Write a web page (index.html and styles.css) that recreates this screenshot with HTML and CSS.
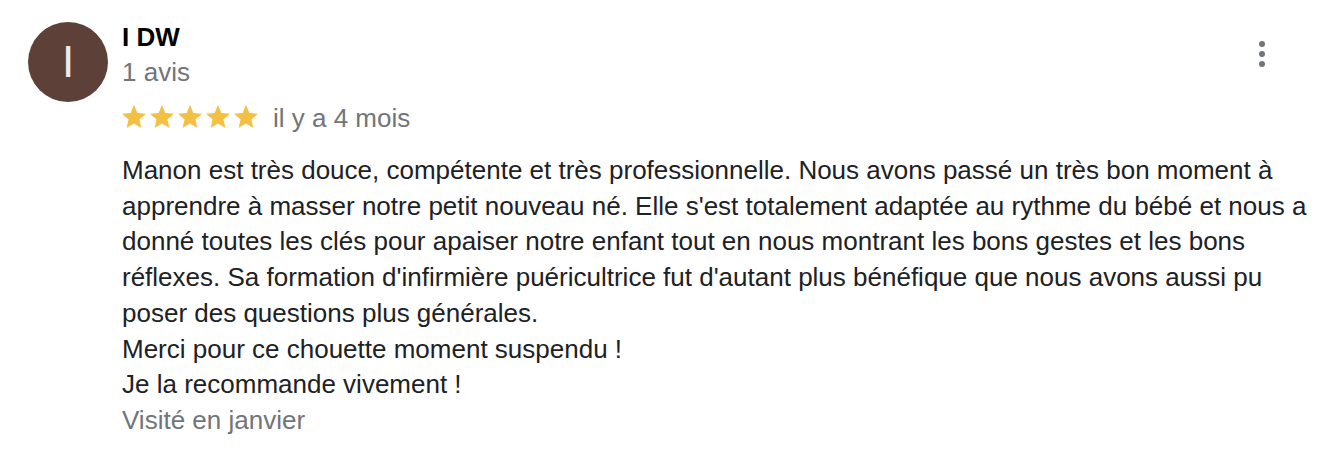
FILE: index.html
```html
<!DOCTYPE html>
<html lang="fr">
<head>
  <meta charset="UTF-8" />
  <meta name="viewport" content="width=device-width, initial-scale=1.0" />
  <title>Avis</title>
  <link rel="stylesheet" href="styles.css">
</head>
<body>
  <div class="review">
    <div class="avatar">I</div>
    <div class="review-main">
      <div class="review-head">
        <div class="author">
          <div class="author-name">I DW</div>
          <div class="author-meta">1 avis</div>
        </div>
        <button class="menu-btn" aria-label="Plus d'options">
          <span></span><span></span><span></span>
        </button>
      </div>
      <div class="rating">
        <div class="stars" aria-label="5 étoiles">
          <svg viewBox="2 2 20 19"><path d="M12 17.27L18.18 21l-1.64-7.03L22 9.24l-7.19-.61L12 2 9.19 8.63 2 9.24l5.46 4.73L5.82 21z"/></svg>
          <svg viewBox="2 2 20 19"><path d="M12 17.27L18.18 21l-1.64-7.03L22 9.24l-7.19-.61L12 2 9.19 8.63 2 9.24l5.46 4.73L5.82 21z"/></svg>
          <svg viewBox="2 2 20 19"><path d="M12 17.27L18.18 21l-1.64-7.03L22 9.24l-7.19-.61L12 2 9.19 8.63 2 9.24l5.46 4.73L5.82 21z"/></svg>
          <svg viewBox="2 2 20 19"><path d="M12 17.27L18.18 21l-1.64-7.03L22 9.24l-7.19-.61L12 2 9.19 8.63 2 9.24l5.46 4.73L5.82 21z"/></svg>
          <svg viewBox="2 2 20 19"><path d="M12 17.27L18.18 21l-1.64-7.03L22 9.24l-7.19-.61L12 2 9.19 8.63 2 9.24l5.46 4.73L5.82 21z"/></svg>
        </div>
        <span class="date">il y a 4 mois</span>
      </div>
      <div class="review-text">
        Manon est très douce, compétente et très professionnelle. Nous avons passé un très bon moment à apprendre à masser notre petit nouveau né. Elle s'est totalement adaptée au rythme du bébé et nous a donné toutes les clés pour apaiser notre enfant tout en nous montrant les bons gestes et les bons réflexes. Sa formation d'infirmière puéricultrice fut d'autant plus bénéfique que nous avons aussi pu poser des questions plus générales.<br>
        Merci pour ce chouette moment suspendu !<br>
        Je la recommande vivement !
      </div>
      <div class="visited">Visité en janvier</div>
    </div>
  </div>
</body>
</html>
```

FILE: styles.css
```css
body { margin: 0; background: #fff; font-family: "Liberation Sans", Arial, sans-serif; color: #202124; }

.review {
  display: flex; gap: 14px;
  padding: 22px 20px 0 28px;
}
.avatar {
  flex: none; width: 80px; height: 80px; border-radius: 50%;
  background: #5d4037; color: #eeeae8;
  display: flex; align-items: center; justify-content: center;
  font-size: 44px; font-weight: 300;
}
.review-main { flex: 1; }
.review-head { display: flex; justify-content: space-between; align-items: flex-start; }
.author-name { font-size: 26px; font-weight: bold; line-height: 30px; color: #000; }
.author-meta { font-size: 26px; color: #70757a; line-height: 40px; }

.menu-btn {
  border: 0; background: none; padding: 0; margin: 19px 51px 0 0;
  display: flex; flex-direction: column; gap: 4px;
}
.menu-btn span { width: 6px; height: 6px; border-radius: 50%; background: #70757a; }

.rating { display: flex; align-items: center; gap: 15px; margin-top: 4px; height: 44px; }
.stars { display: flex; gap: 4px; margin-top: -4px; }
.stars svg { width: 24px; height: 23px; fill: #f4c043; }
.date { font-size: 26px; color: #70757a; }

.review-text { font-size: 26px; line-height: 35.7px; margin-top: 13px; }
.visited { font-size: 26px; color: #70757a; line-height: 35.7px; }
```
